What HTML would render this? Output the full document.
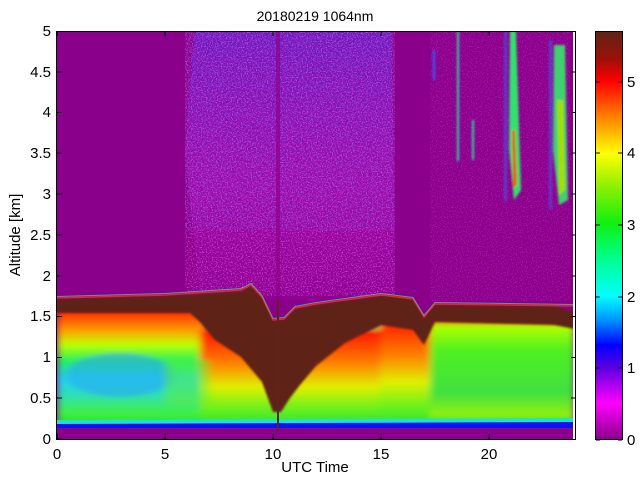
<!DOCTYPE html>
<html><head><meta charset="utf-8"><style>
html,body{margin:0;padding:0;background:#fff;}
svg{display:block;}
text{font-family:"Liberation Sans",sans-serif;font-size:15px;fill:#000;}
</style></head><body>
<svg width="640" height="480" viewBox="0 0 640 480" xmlns="http://www.w3.org/2000/svg">
<defs>
<filter id="bh" x="-5%" y="-5%" width="110%" height="110%"><feGaussianBlur stdDeviation="4 2"/></filter>
<filter id="b2"><feGaussianBlur stdDeviation="1"/></filter>
<filter id="nz" x="0" y="0" width="100%" height="100%">
<feTurbulence type="fractalNoise" baseFrequency="0.8" numOctaves="1" seed="3"/>
<feColorMatrix type="matrix" values="0 0 0 0 0.9  0 0 0 0 0.1  0 0 0 0 1  0 0 0 4 -2"/>
</filter>
<filter id="nz2" x="0" y="0" width="100%" height="100%">
<feTurbulence type="fractalNoise" baseFrequency="0.8" numOctaves="1" seed="9"/>
<feColorMatrix type="matrix" values="0 0 0 0 0.15  0 0 0 0 0.2  0 0 0 0 1  0 0 0 4 -2.1"/>
</filter>
<linearGradient id="cb" x1="0" y1="1" x2="0" y2="0">
<stop offset="0" stop-color="#8b008b"/>
<stop offset="0.088" stop-color="#ff00ff"/>
<stop offset="0.175" stop-color="#5a00e0"/>
<stop offset="0.23" stop-color="#0000ff"/>
<stop offset="0.29" stop-color="#0090ff"/>
<stop offset="0.35" stop-color="#00ffff"/>
<stop offset="0.44" stop-color="#00ff90"/>
<stop offset="0.53" stop-color="#10f010"/>
<stop offset="0.62" stop-color="#90f000"/>
<stop offset="0.70" stop-color="#ffff00"/>
<stop offset="0.79" stop-color="#ff8000"/>
<stop offset="0.877" stop-color="#ff0000"/>
<stop offset="0.93" stop-color="#a01008"/>
<stop offset="1" stop-color="#5e2418"/>
</linearGradient>
<linearGradient id="gl" x1="0" y1="0" x2="0" y2="1">
<stop offset="0" stop-color="#ff2000"/>
<stop offset="0.18" stop-color="#ffa000"/>
<stop offset="0.3" stop-color="#c0ff00"/>
<stop offset="0.45" stop-color="#20f060"/>
<stop offset="0.6" stop-color="#20d8f0"/>
<stop offset="0.75" stop-color="#30e0b0"/>
<stop offset="0.9" stop-color="#40f040"/>
<stop offset="1" stop-color="#20e030"/>
</linearGradient>
<linearGradient id="gm" x1="0" y1="0" x2="0" y2="1">
<stop offset="0" stop-color="#ff1000"/>
<stop offset="0.35" stop-color="#ff8000"/>
<stop offset="0.6" stop-color="#e0f000"/>
<stop offset="0.85" stop-color="#60f020"/>
<stop offset="1" stop-color="#30e030"/>
</linearGradient>
<linearGradient id="gr" x1="0" y1="0" x2="0" y2="1">
<stop offset="0" stop-color="#ff4000"/>
<stop offset="0.08" stop-color="#b0ff00"/>
<stop offset="0.3" stop-color="#50f020"/>
<stop offset="0.7" stop-color="#40e040"/>
<stop offset="0.9" stop-color="#90f010"/>
<stop offset="1" stop-color="#30e030"/>
</linearGradient>
<linearGradient id="ns" x1="0" y1="0" x2="0" y2="1">
<stop offset="0" stop-color="#5030f0" stop-opacity="0.45"/>
<stop offset="0.6" stop-color="#c020e0" stop-opacity="0.3"/>
<stop offset="1" stop-color="#c020e0" stop-opacity="0.05"/>
</linearGradient>
<clipPath id="pc"><rect x="57" y="31" width="516" height="408"/></clipPath>
</defs>

<text x="315" y="21" text-anchor="middle" style="font-size:14px">20180219 1064nm</text>

<g clip-path="url(#pc)">
<rect x="57" y="31" width="519" height="408" fill="#8b008b"/>
<polygon points="195,31 392,31 395,300 200,300 185,150" fill="url(#ns)"/>
<rect x="185" y="31" width="210" height="265" filter="url(#nz)" opacity="0.7"/>
<rect x="185" y="31" width="210" height="200" filter="url(#nz2)" opacity="0.7"/>
<rect x="276" y="31" width="4" height="270" fill="#8b008b" opacity="0.7"/>
<rect x="430" y="31" width="140" height="270" filter="url(#nz)" opacity="0.3"/>
<g filter="url(#b2)">
<polygon points="510,31 516,31 521,190 514,200 509,150" fill="#30e070"/>
<polygon points="512,130 515,130 517,185 513,188" fill="#e06000"/>
<polygon points="554,45 565,45 568,200 559,205 553,150" fill="#40d070"/>
<polygon points="557,100 563,100 565,190 559,195" fill="#a0e000"/>
<rect x="504" y="31" width="3" height="170" fill="#3070ff" opacity="0.5"/>
<rect x="549" y="40" width="3" height="170" fill="#3070ff" opacity="0.5"/>
<rect x="457" y="31" width="2" height="130" fill="#30d0a0"/>
<rect x="472" y="120" width="2" height="40" fill="#30d0a0"/>
<rect x="433" y="50" width="2" height="30" fill="#3060ff"/>
</g>
<g filter="url(#bh)">
<polygon points="57,312 190,312 200,322 215,338 241,355 262,380 273,412 290,400 300,385 316,365 345,345 381,322 413,330 424,345 435,320 575,320 575,425 57,425" fill="#40e040"/>
<rect x="57" y="310" width="150" height="115" fill="url(#gl)"/>
<rect x="200" y="330" width="190" height="95" fill="url(#gm)"/>
<rect x="380" y="318" width="50" height="107" fill="url(#gm)"/>
<rect x="430" y="318" width="145" height="107" fill="url(#gr)"/>
<ellipse cx="120" cy="375" rx="55" ry="22" fill="#2aa8f0" opacity="0.6"/>
<rect x="165" y="360" width="45" height="45" fill="#60f030" opacity="0.5"/>
</g>
<polygon points="57,420 575,418 575,424 57,426" fill="#20e0d0"/>
<polygon points="57,424 575,422 575,428 57,428" fill="#1010f0"/>
<polygon filter="url(#b2)" points="57,299 165,296 241,291 251,286 262,298 273,321 284,320 295,309 316,305 381,296 395,295 413,300 424,318 435,305 554,306 566,310 575,312 575,329 554,325 435,322 424,345 413,330 381,325 345,343 316,366 300,385 290,398 281,412 273,412 262,382 241,357 215,340 200,322 190,313 57,313" fill="#5e2418"/>
<polyline points="57,298 165,295 241,290 251,285 262,297 273,320 284,319 295,308 316,304 381,295 413,299 424,317 435,304 575,306" fill="none" stroke="#ff3000" stroke-width="1.5" opacity="0.8"/>
<polyline points="57,296.5 165,293.5 241,288.5 251,283.5 262,295.5 273,318.5 284,317.5 295,306.5 316,302.5 381,293.5 413,297.5 424,315.5 435,302.5 575,304.5" fill="none" stroke="#30e0c0" stroke-width="1" opacity="0.7"/>
<rect x="277" y="300" width="2" height="130" fill="#5e2418"/>
</g>

<rect x="56.5" y="31.5" width="519" height="408" fill="none" stroke="#000" stroke-width="1"/>
<g stroke="#000" stroke-width="1">
<path d="M57.5 439v-5M165 439v-5M273 439v-5M381 439v-5M489 439v-5M57.5 31v5M165 31v5M273 31v5M381 31v5M489 31v5"/>
<path d="M57 439h5M57 398h5M57 357.5h5M57 316.5h5M57 276h5M57 235h5M57 194h5M57 153h5M57 112.5h5M57 72h5M57 31.5h5"/>
<path d="M576 398h-5M576 357.5h-5M576 316.5h-5M576 276h-5M576 235h-5M576 194h-5M576 153h-5M576 112.5h-5M576 72h-5"/>
</g>
<g text-anchor="end">
<text x="51" y="444">0</text><text x="51" y="403">0.5</text><text x="51" y="362">1</text><text x="51" y="321">1.5</text><text x="51" y="281">2</text><text x="51" y="240">2.5</text><text x="51" y="199">3</text><text x="51" y="158">3.5</text><text x="51" y="117">4</text><text x="51" y="77">4.5</text><text x="51" y="36">5</text>
</g>
<g text-anchor="middle">
<text x="57" y="459">0</text><text x="165" y="459">5</text><text x="273" y="459">10</text><text x="381" y="459">15</text><text x="489" y="459">20</text>
<text x="315" y="472">UTC Time</text>
</g>
<text transform="translate(20,235) rotate(-90)" text-anchor="middle">Altitude [km]</text>

<rect x="596" y="31" width="26" height="408" fill="url(#cb)"/>
<rect x="595.5" y="31.5" width="27" height="408" fill="none" stroke="#000"/>
<g stroke="#000"><path d="M596 440h4M596 368h4M596 297h4M596 225h4M596 153h4M596 82h4M622 440h-4M622 368h-4M622 297h-4M622 225h-4M622 153h-4M622 82h-4"/></g>
<g>
<text x="627" y="445">0</text><text x="627" y="373">1</text><text x="627" y="302">2</text><text x="627" y="230">3</text><text x="627" y="158">4</text><text x="627" y="87">5</text>
</g>
</svg>
</body></html>
